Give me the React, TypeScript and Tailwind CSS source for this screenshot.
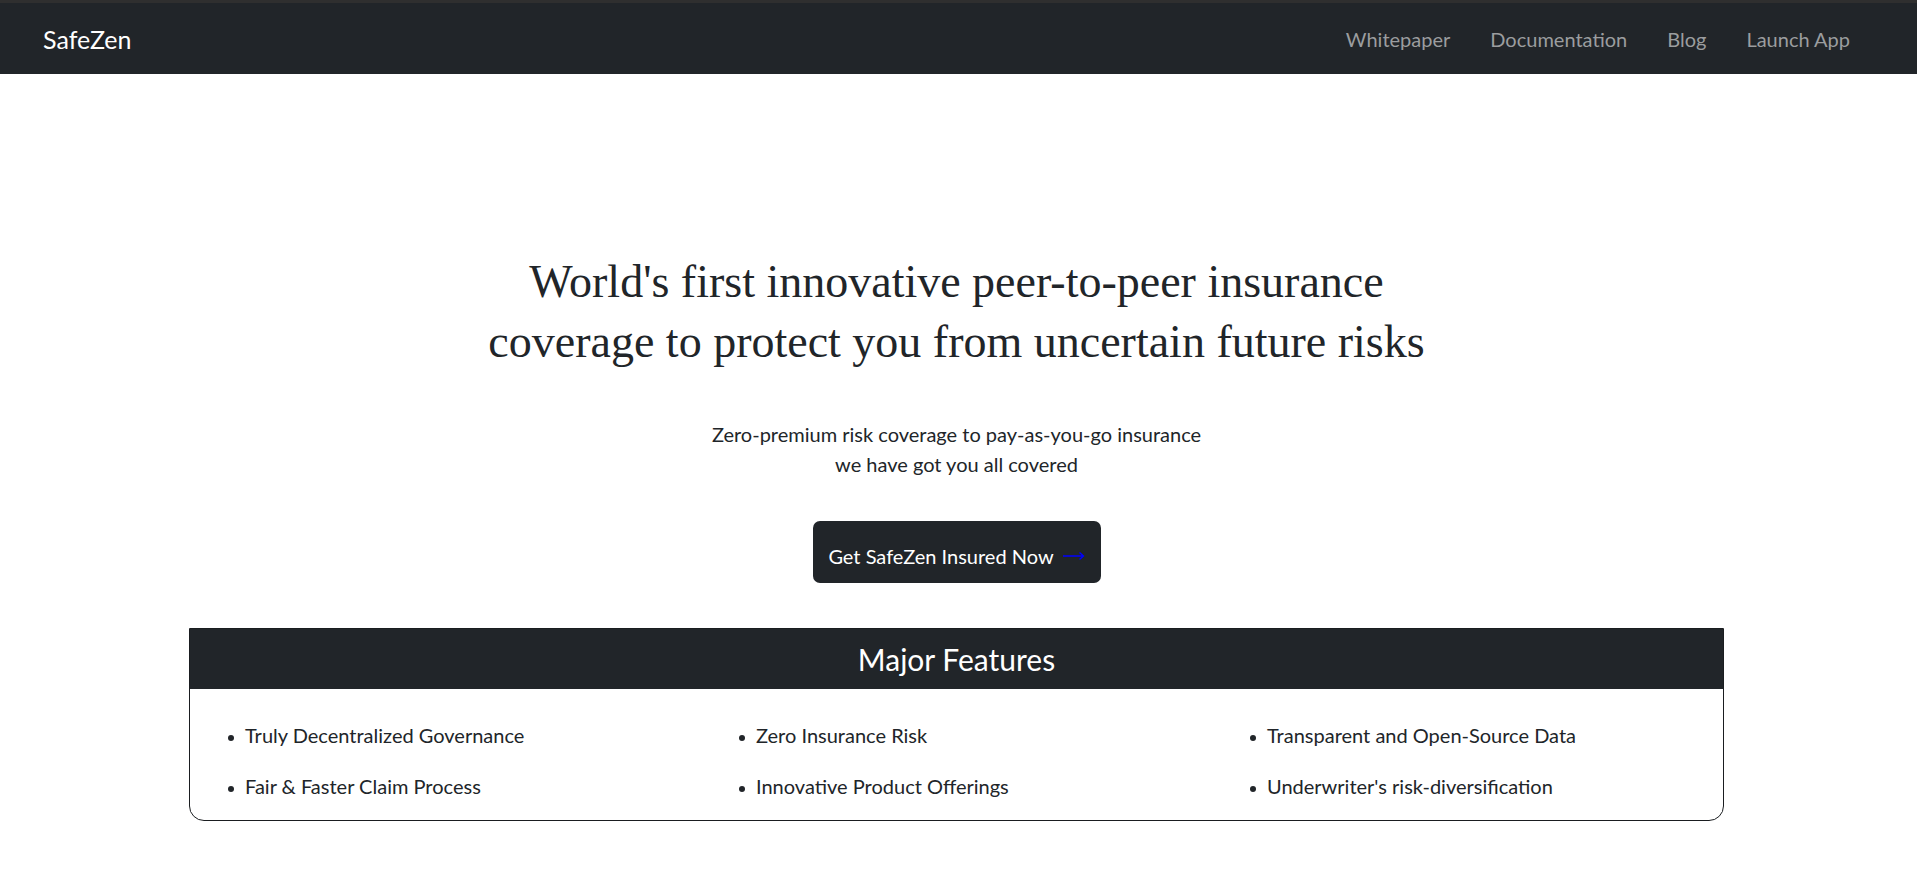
const features = [
  'Truly Decentralized Governance',
  'Zero Insurance Risk',
  'Transparent and Open-Source Data',
  'Fair & Faster Claim Process',
  'Innovative Product Offerings',
  "Underwriter's risk-diversification",
]

const navLinks = ['Whitepaper', 'Documentation', 'Blog', 'Launch App']

function Navbar() {
  return (
    <div>
      <div className="h-[3px] bg-[#2f2f2f]" />
      <nav className="h-[71px] bg-[#212529] flex items-center justify-between pl-[43px] pr-[47px]">
        <a className="text-white text-[25px] leading-[30px]">SafeZen</a>
        <div className="flex items-center">
          {navLinks.map((link) => (
            <a key={link} className="px-[20px] text-[20px] leading-[24px] text-[#9b9d9f]">
              {link}
            </a>
          ))}
        </div>
      </nav>
    </div>
  )
}

/**
 * Feature list card under the hero
 */
function FeatureCard() {
  return (
    <div className="w-[1535px] mx-auto mt-[45px] border border-[#1a1d20] rounded-b-[15px] overflow-hidden">
      <div className="h-[60px] bg-[#212529] flex items-center justify-center">
        <h3 className="text-white text-[30px] leading-[36px]">Major Features</h3>
      </div>
      <div className="grid grid-cols-3 gap-y-[27px] pt-[34px] pb-[22px]">
        {features.map((item) => (
          <div key={item} className="flex items-start pl-[38px] text-[20px] leading-[24px] text-[#212529]">
            <span className="w-[6px] h-[6px] mt-[12px] mr-[11px] rounded-full bg-[#212529] shrink-0" />
            <span>{item}</span>
          </div>
        ))}
      </div>
    </div>
  )
}

export default function App() {
  return (
    <div className="min-h-screen bg-white font-['Lato',sans-serif]">
      <Navbar />

      <div className="pr-[4px]">
        <main className="flex flex-col items-center">
          {/* Hero title */}
          <h1 className="mt-[178px] text-center text-[46px] leading-[60px] text-[#212529] font-['Liberation_Serif',serif]">
            World's first innovative peer-to-peer insurance
            <br />
            coverage to protect you from uncertain future risks
          </h1>

          <p className="mt-[47px] text-center text-[20px] leading-[30px] text-[#212529]">
            Zero-premium risk coverage to pay-as-you-go insurance
            <br />
            we have got you all covered
          </p>

          <button className="mt-[42px] w-[288px] h-[62px] bg-[#212529] rounded-[7px] flex items-start justify-center pt-[23px] text-white text-[20px] leading-[24px]">
            <span>Get SafeZen Insured Now</span>
            <svg className="ml-[9px] mt-[7px]" width="22" height="10" viewBox="0 0 22 10" fill="none">
              <path d="M0 5H20.5M16.5 1.5L20.5 5L16.5 8.5" stroke="#0000ff" strokeWidth="1.4" />
            </svg>
          </button>
        </main>

        <FeatureCard />
      </div>
    </div>
  )
}
